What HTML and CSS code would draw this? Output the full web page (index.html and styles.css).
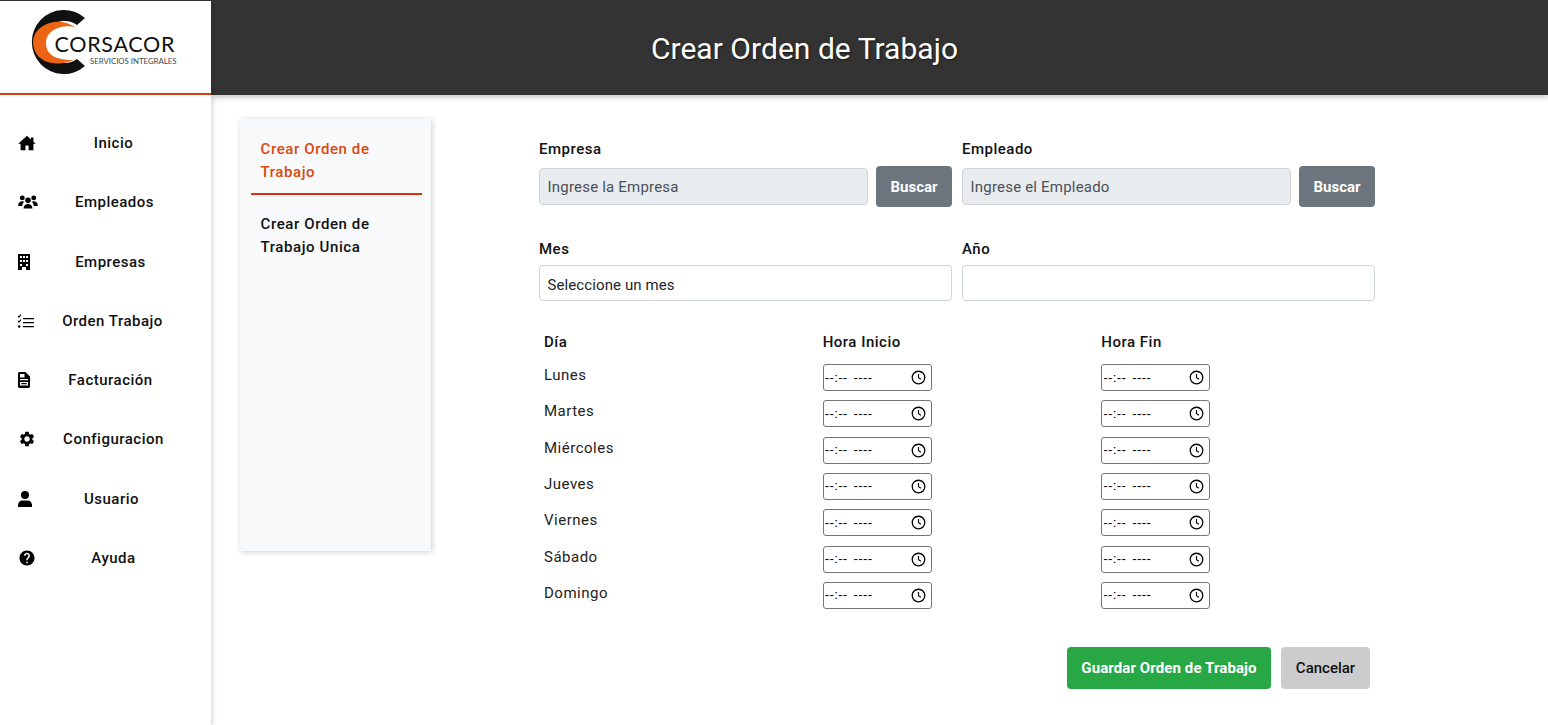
FILE: index.html
```html
<!DOCTYPE html>
<html lang="es">
<head>
  <meta charset="UTF-8" />
  <meta name="viewport" content="width=device-width, initial-scale=1.0"/>
  <title>Crear Orden de Trabajo</title>
  <link rel="stylesheet" href="styles.css">
</head>
<body>

  <aside class="sidebar">
    <div class="logo">
      <svg width="211" height="92" viewBox="0 1 211 92">
        <path d="M85 18 A32 32 0 1 0 85 66 L77 59 A21 21 0 1 1 77 25 Z" fill="#111"/>
        <path d="M75 27 C68 22 60 21 54 22 C42 24 33 32 33 42 C33 54 42 62 52 63 C60 64 68 63 73 60 C62 60 46 58 46 43 C46 30 62 24 75 27 Z" fill="#ec6517"/>
        <text class="logo-name" x="54.500" y="52">CORSACOR</text>
        <text class="logo-sub" x="90" y="63.500">SERVICIOS INTEGRALES</text>
      </svg>
    </div>
    <nav class="menu">
      <a class="menu-item" href="#">
        <svg class="icon" width="18" height="16" viewBox="1 2 22 20"><path d="M12 3 1 13h3v8h6v-6h4v6h6v-8h3l-3-2.700V5h-3v2.600z"/></svg>
        <span>Inicio</span>
      </a>
      <a class="menu-item" href="#">
        <svg class="icon" width="20" height="18" viewBox="0 0 24 22"><circle cx="5" cy="6" r="3"/><circle cx="19" cy="6" r="3"/><circle cx="12" cy="9" r="3.400"/><path d="M0 15c0-3 2-5 5-5 1 0 2 .3 2.600.8C6 12 5 13.600 5 16H0zM24 15c0-3-2-5-5-5-1 0-2 .3-2.600.8C18 12 19 13.600 19 16h5zM6.500 19c0-3 2.500-5.500 5.500-5.500s5.500 2.500 5.500 5.500z"/></svg>
        <span>Empleados</span>
      </a>
      <a class="menu-item" href="#">
        <svg class="icon" width="12" height="16" viewBox="0 0 12 16"><path fill-rule="evenodd" d="M0 0h12v16H8v-3H4v3H0zM2 2v2h2V2zM5 2v2h2V2zM8 2v2h2V2zM2 6v2h2V6zM5 6v2h2V6zM8 6v2h2V6zM2 10v2h2v-2zM8 10v2h2v-2z"/></svg>
        <span>Empresas</span>
      </a>
      <a class="menu-item" href="#">
        <svg class="icon" width="16" height="14" viewBox="0 0 16 14"><path d="M5 4h11v1.300H5zM5 8h11v1.300H5zM5 12h11v1.300H5z"/><path d="M0 2l1 1 2-2.500" fill="none" stroke="#000" stroke-width="1.200"/><path d="M0 7l1 1 2-2.500" fill="none" stroke="#000" stroke-width="1.200"/><circle cx="1.200" cy="12.500" r="1.200"/></svg>
        <span>Orden Trabajo</span>
      </a>
      <a class="menu-item" href="#">
        <svg class="icon" width="12" height="16" viewBox="0 0 12 16"><path fill-rule="evenodd" d="M1.500 0H7.500L12 4.500v10c0 .8-.7 1.500-1.500 1.500h-9C.7 16 0 15.300 0 14.500v-13C0 .7.700 0 1.500 0zM2 2v3.500h4.500V2zM2 7v1.300h8V7zM2 10v3.500h8V10zM3.300 11h5.400v1.300H3.300z"/></svg>
        <span>Facturación</span>
      </a>
      <a class="menu-item" href="#">
        <svg class="icon" width="18" height="18" viewBox="0 0 24 24"><path d="M19.140 12.940c.04-.3.06-.61.06-.94 0-.32-.02-.64-.07-.94l2.030-1.580c.18-.14.23-.41.12-.61l-1.920-3.320c-.12-.22-.37-.29-.59-.22l-2.390.96c-.5-.38-1.030-.7-1.620-.94l-.36-2.540c-.04-.24-.24-.41-.48-.41h-3.840c-.24 0-.43.17-.47.41l-.36 2.540c-.59.24-1.130.57-1.620.94l-2.390-.96c-.22-.08-.47 0-.59.22L2.740 8.870c-.12.21-.08.47.12.61l2.030 1.580c-.05.3-.09.63-.09.94s.02.64.07.94l-2.030 1.580c-.18.14-.23.41-.12.61l1.920 3.320c.12.22.37.29.59.22l2.390-.96c.5.38 1.030.7 1.620.94l.36 2.540c.05.24.24.41.48.41h3.840c.24 0 .44-.17.47-.41l.36-2.540c.59-.24 1.130-.56 1.620-.94l2.390.96c.22.08.47 0 .59-.22l1.920-3.320c.12-.22.07-.47-.12-.61l-2.010-1.580zM12 15.600c-1.980 0-3.600-1.620-3.600-3.600s1.620-3.600 3.600-3.600 3.600 1.620 3.600 3.600-1.620 3.600-3.600 3.600z"/></svg>
        <span>Configuracion</span>
      </a>
      <a class="menu-item" href="#">
        <svg class="icon" width="14" height="16" viewBox="0 0 14 16"><circle cx="7" cy="4" r="4"/><path d="M0 16v-2c0-2.500 2-4.500 4.500-4.500h5c2.500 0 4.500 2 4.500 4.500v2z"/></svg>
        <span>Usuario</span>
      </a>
      <a class="menu-item" href="#">
        <svg class="icon" width="18" height="18" viewBox="0 0 24 24"><path d="M12 2C6.480 2 2 6.480 2 12s4.480 10 10 10 10-4.480 10-10S17.520 2 12 2zm1 17h-2v-2h2v2zm2.070-7.750l-.9.92C13.450 12.900 13 13.500 13 15h-2v-.5c0-1.100.45-2.100 1.170-2.830l1.240-1.260c.37-.36.59-.86.59-1.410 0-1.100-.9-2-2-2s-2 .9-2 2H8c0-2.210 1.790-4 4-4s4 1.790 4 4c0 .88-.36 1.680-.93 2.250z"/></svg>
        <span>Ayuda</span>
      </a>
    </nav>
  </aside>

  <div class="main">
    <header class="topbar">
      <h1>Crear Orden de Trabajo</h1>
    </header>

    <div class="content">
      <div class="tabs">
        <a class="tab active" href="#">Crear Orden de Trabajo</a>
        <a class="tab" href="#">Crear Orden de Trabajo Unica</a>
      </div>

      <form class="form">
        <div class="row">
          <div class="field">
            <label>Empresa</label>
            <div class="search">
              <input class="input readonly" type="text" placeholder="Ingrese la Empresa" readonly>
              <button class="btn btn-gray" type="button">Buscar</button>
            </div>
          </div>
          <div class="field">
            <label>Empleado</label>
            <div class="search">
              <input class="input readonly" type="text" placeholder="Ingrese el Empleado" readonly>
              <button class="btn btn-gray" type="button">Buscar</button>
            </div>
          </div>
        </div>

        <div class="row row-date">
          <div class="field">
            <label>Mes</label>
            <div class="input select">Seleccione un mes</div>
          </div>
          <div class="field">
            <label>Año</label>
            <input class="input plain" type="text">
          </div>
        </div>

        <table class="hours">
          <thead>
            <tr><th>Día</th><th>Hora Inicio</th><th>Hora Fin</th></tr>
          </thead>
          <tbody id="hoursBody"></tbody>
        </table>

        <div class="actions">
          <button class="btn btn-green" type="button">Guardar Orden de Trabajo</button>
          <button class="btn btn-light" type="button">Cancelar</button>
        </div>
      </form>
    </div>
  </div>

  <script>
    const dias = ['Lunes', 'Martes', 'Miércoles', 'Jueves', 'Viernes', 'Sábado', 'Domingo'];
    const timeBox = `
      <div class="time">
        <span>--:-- ----</span>
        <svg width="15" height="15" viewBox="0 0 16 16"><circle cx="8" cy="8" r="6.700" fill="none" stroke="#000" stroke-width="1.400"/><path d="M8 4.200V8.300l2.600 1.600" fill="none" stroke="#000" stroke-width="1.200"/></svg>
      </div>`;
    const tbody = document.getElementById('hoursBody');

    dias.forEach(dia => {
      const row = document.createElement('tr');
      row.innerHTML = `<td>${dia}</td><td>${timeBox}</td><td>${timeBox}</td>`;
      tbody.appendChild(row);
    });
  </script>
</body>
</html>
```

FILE: styles.css
```css
* {
  box-sizing: border-box;
}
body {
  margin: 0;
  height: 725px;
  overflow: hidden;
  display: flex;
  font-family: Roboto, "Liberation Sans", sans-serif;
  letter-spacing: 0.5px;
  color: #111;
  background: #fff;
}

.sidebar {
  width: 211px;
  flex-shrink: 0;
  background: #fff;
  box-shadow: 1px 0 5px rgba(0, 0, 0, 0.2);
  position: relative;
  z-index: 2;
}
.logo {
  height: 95px;
  border-top: 1px solid #333;
  border-bottom: 2px solid #d9400f;
}
.logo svg {
  display: block;
}
.logo-name {
  font-family: Lato, sans-serif;
  font-size: 21.500px;
  letter-spacing: 0.7px;
  fill: #111;
}
.logo-sub {
  font-family: Lato, sans-serif;
  font-size: 7.800px;
  letter-spacing: 0;
  fill: #444;
}
.menu {
  display: flex;
  flex-direction: column;
  padding-top: 18.300px;
}
.menu-item {
  height: 59.300px;
  flex-shrink: 0;
  display: flex;
  align-items: center;
  padding: 0 20px 0 18px;
  color: #111;
  font-size: 15px;
  font-weight: 500;
  text-decoration: none;
}
.menu-item span {
  flex: 1;
  text-align: center;
}
.icon {
  fill: #000;
  flex-shrink: 0;
}

.main {
  flex: 1;
  min-width: 0;
}
.topbar {
  height: 95px;
  background: #333;
  display: flex;
  align-items: center;
  justify-content: center;
  padding: 2px 150px 0 0;
  box-shadow: 0 2px 6px rgba(0, 0, 0, 0.25);
}
.topbar h1 {
  margin: 0;
  color: #fff;
  font-size: 30px;
  font-weight: 400;
  letter-spacing: 0.03px;
  text-shadow: 1px 1px 2px rgba(0, 0, 0, 0.5);
}

.content {
  display: flex;
  padding: 24px 173px 0 29px;
}
.tabs {
  width: 191px;
  height: 432px;
  flex-shrink: 0;
  background: #f8f9fa;
  box-shadow: 1px 1px 6px rgba(0, 0, 0, 0.2);
  padding: 9px 9px 10px 11px;
  display: flex;
  flex-direction: column;
  margin-right: 108px;
}
.tab {
  padding: 10px 9.500px;
  color: #111;
  font-size: 15px;
  font-weight: 500;
  letter-spacing: 0.6px;
  line-height: 23px;
  text-decoration: none;
}
.tab.active {
  color: #d9480f;
  border-bottom: 2px solid #d9300b;
  padding-bottom: 9px;
  margin-bottom: 8px;
}

.form {
  flex: 1;
  min-width: 0;
  padding-top: 20px;
}
.row {
  display: grid;
  grid-template-columns: 1fr 1fr;
  gap: 10px;
}
.row-date {
  margin-top: 32px;
}
.field label {
  display: block;
  font-size: 15px;
  font-weight: 500;
  line-height: 20px;
  margin-bottom: 6px;
}
.search {
  display: flex;
  align-items: center;
  gap: 8px;
  margin-top: 7px;
}
.input {
  display: block;
  width: 100%;
  border: 1px solid #ced4da;
  border-radius: 4px;
  padding: 0 7.500px;
  font-family: inherit;
  font-size: 15px;
  letter-spacing: 0.2px;
  color: #212529;
  outline: none;
}
.input::placeholder {
  color: #495057;
  opacity: 1;
}
.readonly {
  flex: 1;
  min-width: 0;
  height: 37px;
  background: #e9ecef;
}
.select,
.plain {
  height: 36px;
  background: #fff;
}
.select {
  line-height: 38px;
  letter-spacing: 0.1px;
}

.btn {
  border: none;
  border-radius: 4px;
  font-family: Roboto, sans-serif;
  font-size: 15px;
  letter-spacing: 0;
  height: 42px;
  cursor: pointer;
}
.btn-gray {
  width: 76px;
  height: 41px;
  flex-shrink: 0;
  background: #6c757d;
  color: #fff;
  font-weight: 700;
}
.btn-green {
  width: 204px;
  background: #28a745;
  color: #fff;
  font-weight: 700;
  letter-spacing: 0.1px;
}
.btn-light {
  width: 89px;
  background: #ccc;
  color: #111;
  font-weight: 500;
}

.hours {
  width: 100%;
  margin-top: 26px;
  border-collapse: collapse;
  table-layout: fixed;
}
.hours th {
  padding: 5px;
  height: 33px;
  text-align: left;
  vertical-align: top;
  line-height: 20px;
  font-size: 15px;
  font-weight: 500;
}
.hours td {
  height: 36.330px;
  padding: 0 5px;
  font-size: 15px;
  vertical-align: top;
  line-height: 30px;
  color: #222;
}
.time {
  width: 109px;
  height: 27px;
  margin-top: 4px;
  border: 1px solid #767676;
  border-radius: 3px;
  display: flex;
  align-items: center;
  justify-content: space-between;
  padding: 0 5px 0 1px;
  font-family: "Liberation Sans", sans-serif;
  font-size: 13.330px;
  letter-spacing: 0.3px;
  word-spacing: 2px;
  color: #000;
}
.time svg {
  display: block;
}

.actions {
  display: flex;
  gap: 10px;
  margin-top: 33px;
  padding-left: 528px;
}
```
